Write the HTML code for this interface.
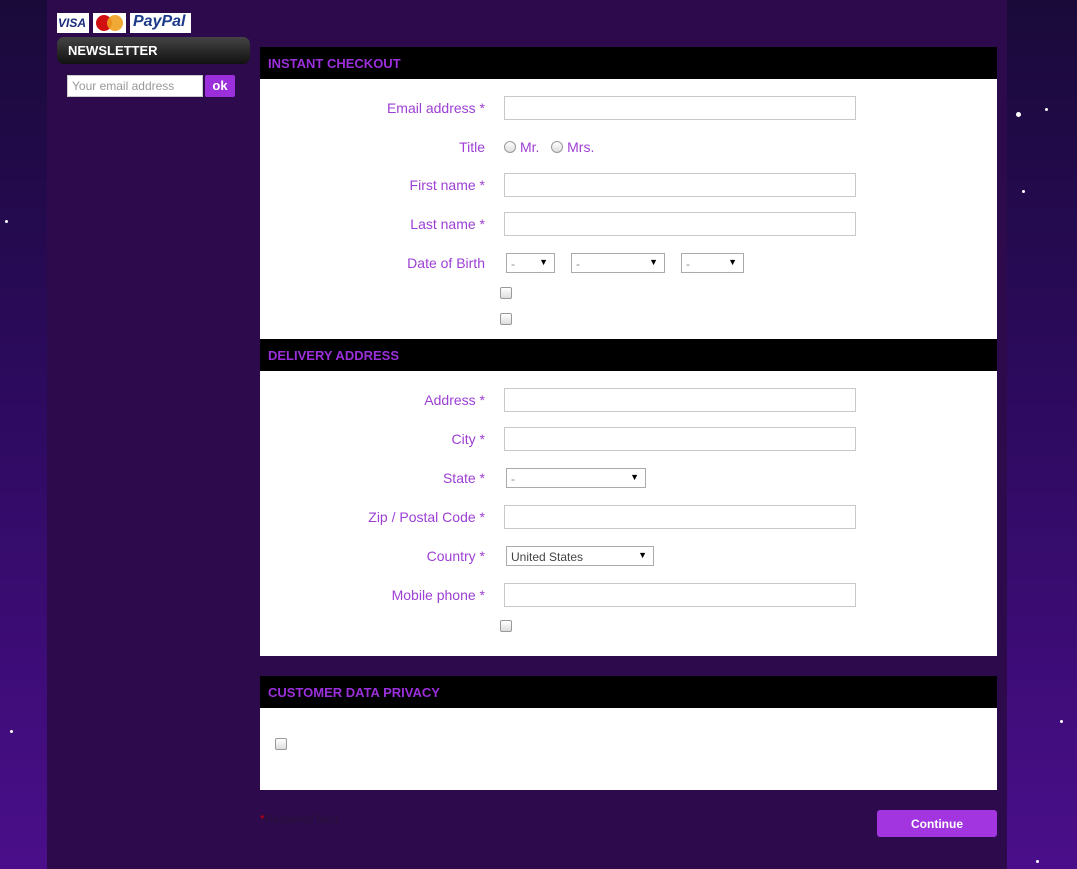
<!DOCTYPE html>
<html><head><meta charset="utf-8"><style>
*{margin:0;padding:0;box-sizing:border-box}
body{width:1077px;height:869px;overflow:hidden;font-family:"Liberation Sans",sans-serif;position:relative;
background:linear-gradient(180deg,#1a0a3a 0%,#2a0a5a 40%,#4a0e8a 100%)}
.col{position:absolute;left:47px;top:0;width:960px;height:869px;background:#2d0a4c}
.a{position:absolute}
.hd{position:absolute;left:260px;width:737px;height:32px;background:#000;color:#9b2fdc;font-weight:bold;font-size:13px;padding:9px 8px}
.pn{position:absolute;left:260px;width:737px;background:#fff}
.lb{position:absolute;right:592px;font-size:14px;color:#9d3fd4;text-align:right}
.in{position:absolute;left:504px;width:352px;height:24px;border:1px solid #c8c8c8;background:#fff}
.sel{position:absolute;height:20px;border:1px solid #aaa;background:#fff;font-size:12px;color:#888;padding:3px 4px}
.sel:after{content:"▼";position:absolute;right:6px;top:3px;font-size:9px;color:#000}
.cb{position:absolute;width:12px;height:12px;border:1px solid #999;border-radius:2px;background:linear-gradient(#fff,#ddd)}
.rd{display:inline-block;width:12px;height:12px;border:1px solid #999;border-radius:50%;background:linear-gradient(#fff,#ddd);vertical-align:-1px;margin-right:4px}
.star{position:absolute;width:3px;height:3px;border-radius:50%;background:#fff}
</style></head><body>
<div class="star" style="left:1016px;top:112px;width:5px;height:5px"></div>
<div class="star" style="left:1045px;top:108px"></div>
<div class="star" style="left:1022px;top:190px"></div>
<div class="star" style="left:1060px;top:720px"></div>
<div class="star" style="left:10px;top:730px"></div>
<div class="star" style="left:5px;top:220px"></div>
<div class="star" style="left:1036px;top:860px"></div>
<div class="col"></div>
<div class="a" style="left:57px;top:13px;width:32px;height:20px;background:#fff;font:italic bold 12px 'Liberation Sans';color:#1a2a7a;padding:3px 1px">VISA</div>
<div class="a" style="left:93px;top:13px;width:33px;height:20px;background:#fff"><div class="a" style="left:3px;top:2px;width:16px;height:16px;border-radius:50%;background:#d01010"></div><div class="a" style="left:14px;top:2px;width:16px;height:16px;border-radius:50%;background:#f0a020;opacity:.9"></div></div>
<div class="a" style="left:130px;top:13px;width:61px;height:20px;background:#fff;font:italic bold 16px 'Liberation Sans';color:#1d3a8a;padding:0 3px">PayPal</div>
<div class="a" style="left:57px;top:37px;width:193px;height:27px;border-radius:7px;background:linear-gradient(#444,#111);color:#fff;font-weight:bold;font-size:13px;padding:6px 11px">NEWSLETTER</div>
<div class="a" style="left:67px;top:75px;width:136px;height:22px;background:#fff;border:1px solid #ccc;font-size:12px;color:#999;padding:3px 4px">Your email address</div>
<div class="a" style="left:205px;top:75px;width:30px;height:22px;background:#9b2fdc;border-radius:2px;color:#fff;font-weight:bold;font-size:13px;text-align:center;padding-top:3px">ok</div>

<div class="hd" style="top:47px">INSTANT CHECKOUT</div>
<div class="pn" style="top:79px;height:260px"></div>
<div class="lb" style="top:100px">Email address *</div><div class="in" style="top:96px"></div>
<div class="lb" style="top:139px">Title</div>
<div class="a" style="left:504px;top:139px;font-size:14px;color:#9d3fd4"><span class="rd"></span>Mr. &nbsp; <span class="rd"></span>Mrs.</div>
<div class="lb" style="top:177px">First name *</div><div class="in" style="top:173px"></div>
<div class="lb" style="top:216px">Last name *</div><div class="in" style="top:212px"></div>
<div class="lb" style="top:255px">Date of Birth</div>
<div class="sel" style="left:506px;top:253px;width:49px">-</div>
<div class="sel" style="left:571px;top:253px;width:94px">-</div>
<div class="sel" style="left:681px;top:253px;width:63px">-</div>
<div class="cb" style="left:500px;top:287px"></div>
<div class="cb" style="left:500px;top:313px"></div>

<div class="hd" style="top:339px">DELIVERY ADDRESS</div>
<div class="pn" style="top:371px;height:285px"></div>
<div class="lb" style="top:392px">Address *</div><div class="in" style="top:388px"></div>
<div class="lb" style="top:431px">City *</div><div class="in" style="top:427px"></div>
<div class="lb" style="top:470px">State *</div><div class="sel" style="left:506px;top:468px;width:140px">-</div>
<div class="lb" style="top:509px">Zip / Postal Code *</div><div class="in" style="top:505px"></div>
<div class="lb" style="top:548px">Country *</div><div class="sel" style="left:506px;top:546px;width:148px;color:#444">United States</div>
<div class="lb" style="top:587px">Mobile phone *</div><div class="in" style="top:583px"></div>
<div class="cb" style="left:500px;top:620px"></div>

<div class="hd" style="top:676px">CUSTOMER DATA PRIVACY</div>
<div class="pn" style="top:708px;height:82px"></div>
<div class="cb" style="left:275px;top:738px"></div>

<div class="a" style="left:260px;top:812px;font-size:12px;color:#2a1238"><span style="color:#c00">*</span>Required field</div>
<div class="a" style="left:877px;top:810px;width:120px;height:27px;background:#a235e0;border-radius:3px;color:#fff;font-weight:bold;font-size:12px;text-align:center;padding-top:7px">Continue</div>
</body></html>
